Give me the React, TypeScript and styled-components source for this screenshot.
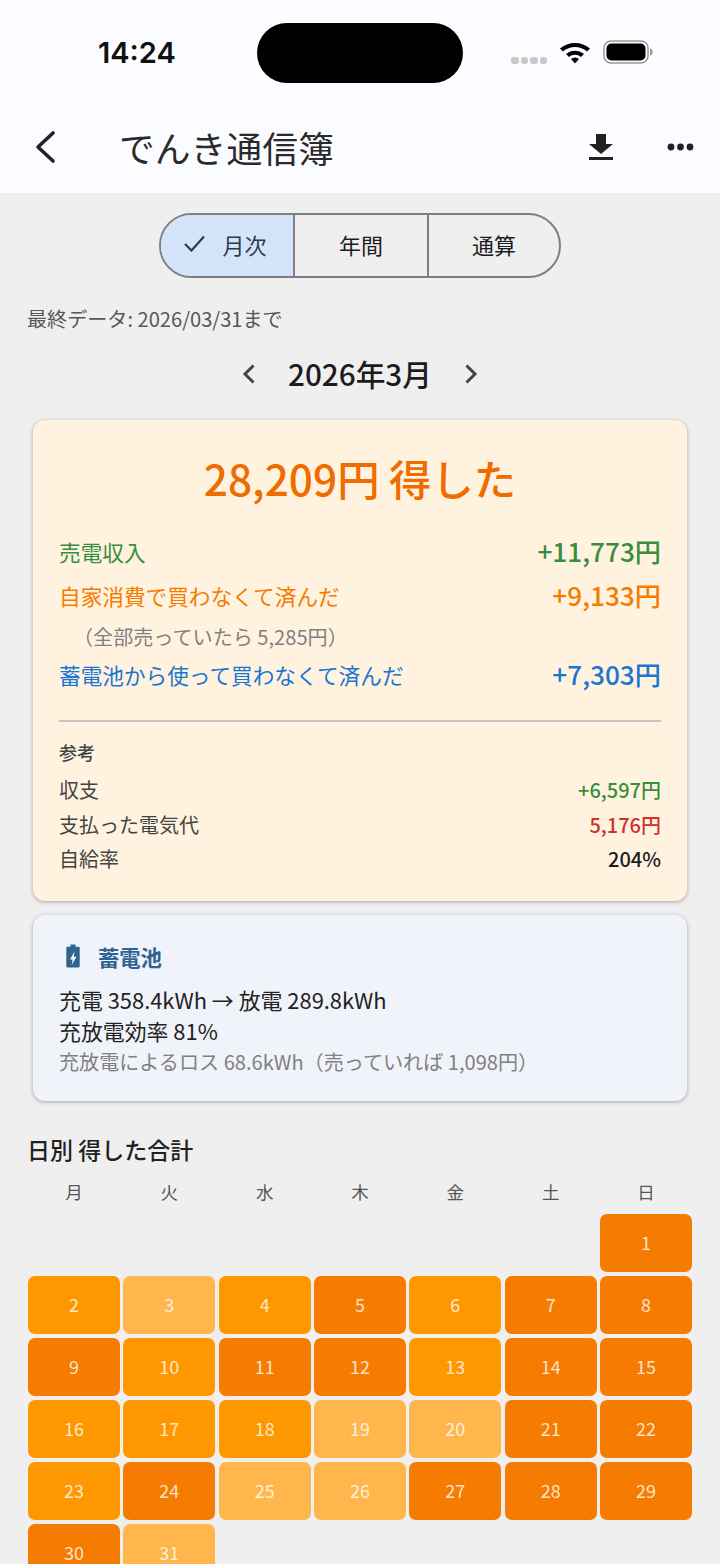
import styled, { createGlobalStyle } from "styled-components";

const GlobalStyle = createGlobalStyle`
  html, body {
    margin: 0;
    padding: 0;
    background: #efefef;
  }
  body {
    font-family: "Noto Sans CJK JP", "Noto Sans", sans-serif;
  }
`

const Page = styled.div`
  width: 720px;
  height: 1564px;
  overflow: hidden;
  background: #efefef;
  display: flex;
  flex-direction: column;
`

const TopArea = styled.div`
  height: 193px;
  background: #fbfcff;
  flex-shrink: 0;
`

const StatusBar = styled.div`
  height: 104px;
  display: flex;
  align-items: flex-start;
  padding-top: 23px;
  box-sizing: border-box;
`

const Clock = styled.div`
  width: 257px;
  padding-left: 98px;
  box-sizing: border-box;
  padding-top: 12px;
  font-family: Inter, sans-serif;
  font-size: 29px;
  line-height: 36px;
  font-weight: 600;
  color: #111;
`

const Island = styled.div`
  width: 206px;
  height: 60px;
  background: #000;
  border-radius: 30px;
`

const StatusIcons = styled.div`
  display: flex;
  align-items: center;
  padding: 17px 0 0 48px;
`

const SignalDots = styled.div`
  display: flex;
  gap: 2px;
  margin-top: 16px;
  margin-right: 12px;
`

const SignalDot = styled.span`
  width: 7.5px;
  height: 7px;
  border-radius: 3px;
  background: #c9c9c9;
`

const AppBar = styled.div`
  height: 89px;
  display: flex;
  align-items: center;
  padding-bottom: 4px;
  box-sizing: border-box;
`

const BackButton = styled.div`
  width: 119px;
  padding-left: 34px;
  box-sizing: border-box;
  display: flex;
  align-items: center;
`

const AppTitle = styled.div`
  flex: 1;
  font-size: 35.8px;
  line-height: 44px;
  color: #2a2a2a;
`

const AppActions = styled.div`
  display: flex;
  align-items: center;
  gap: 53px;
  padding-right: 26px;
`

const Content = styled.div`
  padding: 20px 28px 0;
  display: flex;
  flex-direction: column;
`

const Segments = styled.div`
  align-self: center;
  display: grid;
  grid-template-columns: 132px 134px 132px;
  width: 402px;
  height: 65px;
  box-sizing: border-box;
  border: 2px solid #7d7f84;
  border-radius: 33px;
  overflow: hidden;
`

const Segment = styled.div<{ $active?: boolean }>`
  display: flex;
  align-items: center;
  justify-content: center;
  gap: 17px;
  padding-bottom: 4px;
  padding-right: ${(p) => (p.$active ? "3px" : "0")};
  box-sizing: border-box;
  font-size: 22px;
  color: ${(p) => (p.$active ? "#2f3a4a" : "#1d1d1f")};
  background: ${(p) => (p.$active ? "#d3e3fa" : "transparent")};
  & + & {
    border-left: 2px solid #7d7f84;
  }
`

const UpdatedAt = styled.div`
  margin: 27px 0 0 -1px;
  font-size: 20.1px;
  line-height: 28px;
  color: #55585c;
`

const MonthNav = styled.div`
  margin-top: 18px;
  height: 46px;
  display: flex;
  align-items: center;
  justify-content: center;
  gap: 32px;
`

const MonthLabel = styled.div`
  font-size: 29.7px;
  line-height: 44px;
  font-weight: 500;
  color: #1c1c1e;
`

const Card = styled.div<{ $bg: string }>`
  margin: 0 5px;
  background: ${(p) => p.$bg};
  border-radius: 12px;
  box-shadow: 0 1px 4px rgba(0, 0, 0, 0.3);
  box-sizing: border-box;
`

const SummaryCard = styled(Card)`
  margin-top: 23px;
  height: 481px;
  padding: 25px 26px 0;
`

const Headline = styled.div`
  text-align: center;
  font-size: 42.4px;
  line-height: 66px;
  font-weight: 500;
  color: #ef6c00;
`

const MainRows = styled.div`
  margin-top: 18px;
`

const MainRow = styled.div<{ $color: string; $height: number }>`
  display: flex;
  justify-content: space-between;
  align-items: center;
  height: ${(p) => p.$height}px;
  color: ${(p) => p.$color};
  font-size: 21.65px;
`

const MainValue = styled.span`
  font-size: 26.2px;
  font-weight: 500;
`

const NoteLine = styled.div`
  height: 35px;
  padding-left: 14px;
  padding-top: 4px;
  box-sizing: border-box;
  display: flex;
  align-items: center;
  font-size: 20.1px;
  color: #808080;
`

const Divider = styled.div`
  height: 1.5px;
  background: #c4c4c0;
  margin-top: 24px;
`

const RefTitle = styled.div`
  margin-top: 17px;
  font-size: 18px;
  line-height: 26px;
  font-weight: 500;
  color: #444;
`

const RefRows = styled.div`
  margin-top: 8px;
`

const RefRow = styled.div`
  display: flex;
  justify-content: space-between;
  align-items: center;
  height: 34.5px;
  font-size: 20px;
  color: #444;
`

const RefValue = styled.span<{ $color: string }>`
  color: ${(p) => p.$color};
  font-weight: 500;
`

const BatteryCard = styled(Card)`
  margin-top: 14px;
  height: 186px;
  padding: 21px 26px 0;
`

const BatteryHead = styled.div`
  display: flex;
  align-items: center;
  gap: 18px;
  padding-left: 7px;
  height: 40px;
  font-size: 21.3px;
  font-weight: 700;
  color: #2f6491;
`

const BatteryLine = styled.div<{ $muted?: boolean }>`
  font-size: ${(p) => (p.$muted ? "20.1px" : "21.9px")};
  line-height: ${(p) => (p.$muted ? "31px" : "30.5px")};
  color: ${(p) => (p.$muted ? "#808080" : "#222")};
`

const BatteryLines = styled.div`
  margin-top: 9px;
`

const CalendarTitle = styled.div`
  margin: 31px 0 0 -1px;
  font-size: 23px;
  line-height: 34px;
  font-weight: 500;
  color: #222;
`

const Week = styled.div`
  display: grid;
  grid-template-columns: repeat(7, 1fr);
  gap: 3.5px;
  margin-top: 11px;
  height: 28px;
  align-items: center;
`

const WeekDay = styled.div`
  text-align: center;
  font-size: 17.5px;
  color: #555;
`

const Days = styled.div`
  display: grid;
  grid-template-columns: repeat(7, 1fr);
  grid-auto-rows: 58px;
  gap: 4px 3.5px;
  margin-top: 9px;
`

const Day = styled.div<{ $level?: number }>`
  border-radius: 7px;
  display: flex;
  align-items: center;
  justify-content: center;
  padding-bottom: 2px;
  box-sizing: border-box;
  font-size: 18px;
  color: rgba(255, 255, 255, 0.8);
  background: ${(p) => ["transparent", "#ffb74d", "#ff9800", "#f57c00"][p.$level ?? 0]};
`

const days = [
  0, 0, 0, 0, 0, 0, 3,
  2, 1, 2, 3, 2, 3, 3,
  3, 2, 3, 3, 2, 3, 3,
  2, 2, 2, 1, 1, 3, 3,
  2, 3, 1, 1, 3, 3, 3,
  3, 1,
]

function BatteryIcon() {
  return (
    <svg width="14" height="24" viewBox="0 0 14 24">
      <path
        fillRule="evenodd"
        fill="#2f6491"
        d="M4.500 0.500h5v2.200h3c.7 0 1.200.5 1.200 1.200v18.400c0 .7-.5 1.200-1.200 1.200h-11c-.7 0-1.200-.5-1.200-1.200V3.900c0-.7.5-1.200 1.200-1.200h3V.5zM8.500 7.500l-4.500 8h2.600l-.8 5.500 4.700-8.200H7.800l.7-5.300z"
      />
    </svg>
  )
}

export default function App() {
  let dayNumber = 0

  return (
    <Page>
      <GlobalStyle />
      <TopArea>
        <StatusBar>
          <Clock>14:24</Clock>
          <Island />
          <StatusIcons>
            <SignalDots>
              <SignalDot />
              <SignalDot />
              <SignalDot />
              <SignalDot />
            </SignalDots>
            <svg width="32" height="24" viewBox="0 0 32 24">
              <path d="M1 8.500C9 1 23 1 31 8.500l-3 3C21.500 5.500 10.500 5.500 4 11.500z" fill="#000" />
              <path d="M7 14c5-4.500 13-4.500 18 0l-3 3c-3.500-3-8.500-3-12 0z" fill="#000" />
              <path d="M12 19c2.500-2 5.500-2 8 0l-4 4.500z" fill="#000" />
            </svg>
            <svg width="52" height="24" viewBox="0 0 52 24" style={{ marginLeft: 12 }}>
              <rect x="1" y="1" width="44" height="22" rx="7" fill="none" stroke="#999" strokeWidth="1.500" />
              <rect x="3.500" y="3.500" width="39" height="17" rx="5" fill="#000" />
              <path d="M47 8.500c2 .5 2.500 1.500 2.500 3.500s-.5 3-2.500 3.500z" fill="#999" />
            </svg>
          </StatusIcons>
        </StatusBar>
        <AppBar>
          <BackButton>
            <svg width="24" height="34" viewBox="0 0 24 34">
              <path d="M19 3L4 17l15 14" fill="none" stroke="#222" strokeWidth="3.600" strokeLinecap="round" strokeLinejoin="round" />
            </svg>
          </BackButton>
          <AppTitle>でんき通信簿</AppTitle>
          <AppActions>
            <svg width="26" height="28" viewBox="0 0 26 28">
              <path d="M8 1h10v10h7L13 21 1 11h7zM1 24h24v3H1z" fill="#222" />
            </svg>
            <svg width="27" height="8" viewBox="0 0 27 8">
              <circle cx="4" cy="4" r="3.400" fill="#222" />
              <circle cx="13.500" cy="4" r="3.400" fill="#222" />
              <circle cx="23" cy="4" r="3.400" fill="#222" />
            </svg>
          </AppActions>
        </AppBar>
      </TopArea>
      <Content>
        <Segments>
          <Segment $active>
            <svg width="21" height="17" viewBox="0 0 21 17">
              <path d="M1 9l6.500 6.500L20 1.500" fill="none" stroke="#2f3a4a" strokeWidth="2.200" />
            </svg>
            月次
          </Segment>
          <Segment>年間</Segment>
          <Segment>通算</Segment>
        </Segments>
        <UpdatedAt>最終データ: 2026/03/31まで</UpdatedAt>
        <MonthNav>
          <svg width="14" height="22" viewBox="0 0 14 22">
            <path d="M11.500 2.500L3 11l8.500 8.500" fill="none" stroke="#444" strokeWidth="3" />
          </svg>
          <MonthLabel>2026年3月</MonthLabel>
          <svg width="14" height="22" viewBox="0 0 14 22">
            <path d="M2.500 2.500L11 11l-8.500 8.500" fill="none" stroke="#444" strokeWidth="3" />
          </svg>
        </MonthNav>
        <SummaryCard $bg="#fff3e0">
          <Headline>28,209円 得した</Headline>
          <MainRows>
            <MainRow $color="#388e3c" $height={44}>
              売電収入<MainValue>+11,773円</MainValue>
            </MainRow>
            <MainRow $color="#f57c00" $height={44}>
              自家消費で買わなくて済んだ<MainValue>+9,133円</MainValue>
            </MainRow>
            <NoteLine>（全部売っていたら 5,285円）</NoteLine>
            <MainRow $color="#1976d2" $height={44}>
              蓄電池から使って買わなくて済んだ<MainValue>+7,303円</MainValue>
            </MainRow>
          </MainRows>
          <Divider />
          <RefTitle>参考</RefTitle>
          <RefRows>
            <RefRow>
              収支<RefValue $color="#388e3c">+6,597円</RefValue>
            </RefRow>
            <RefRow>
              支払った電気代<RefValue $color="#d32f2f">5,176円</RefValue>
            </RefRow>
            <RefRow>
              自給率<RefValue $color="#1c1c1e">204%</RefValue>
            </RefRow>
          </RefRows>
        </SummaryCard>
        <BatteryCard $bg="#f1f3fa">
          <BatteryHead>
            <BatteryIcon />
            蓄電池
          </BatteryHead>
          <BatteryLines>
            <BatteryLine>充電 358.4kWh → 放電 289.8kWh</BatteryLine>
            <BatteryLine>充放電効率 81%</BatteryLine>
            <BatteryLine $muted>充放電によるロス 68.6kWh（売っていれば 1,098円）</BatteryLine>
          </BatteryLines>
        </BatteryCard>
        <CalendarTitle>日別 得した合計</CalendarTitle>
        <Week>
          {["月", "火", "水", "木", "金", "土", "日"].map((d) => (
            <WeekDay key={d}>{d}</WeekDay>
          ))}
        </Week>
        <Days>
          {days.map((level, i) => (
            <Day key={i} $level={level}>
              {level > 0 ? ++dayNumber : ""}
            </Day>
          ))}
        </Days>
      </Content>
    </Page>
  )
}
